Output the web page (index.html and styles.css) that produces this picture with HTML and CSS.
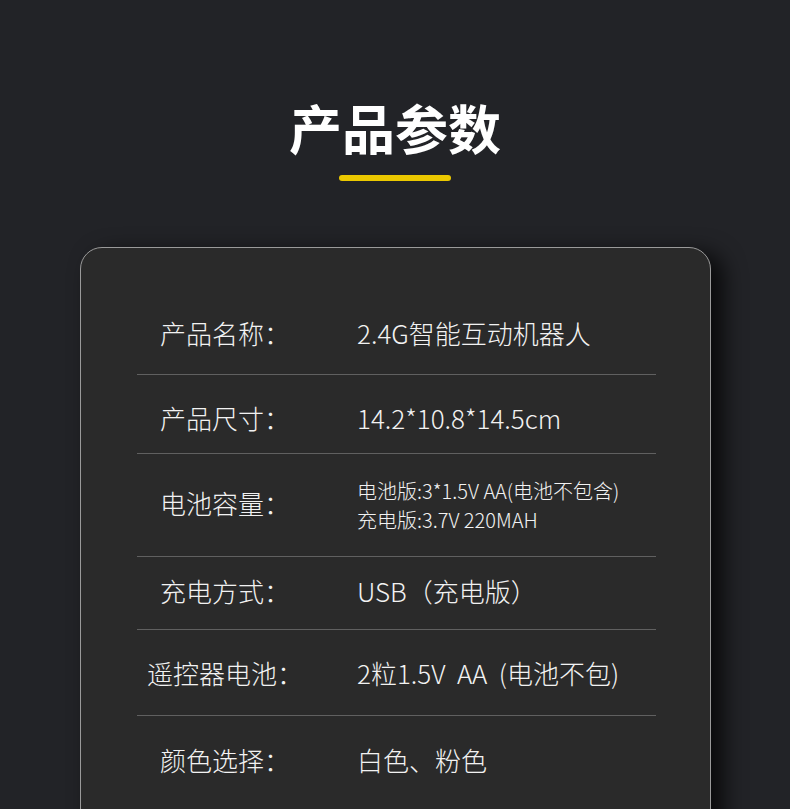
FILE: index.html
```html
<!DOCTYPE html>
<html lang="zh-CN">
<head>
<meta charset="utf-8">
<link rel="stylesheet" href="styles.css">
</head>
<body>
<div class="page">
  <header class="head">
    <h1 class="title">产品参数</h1>
    <div class="bar"></div>
  </header>
  <section class="card">
    <div class="row row-1">
      <div class="label">产品名称：</div>
      <div class="value">2.4G智能互动机器人</div>
    </div>
    <div class="row row-2">
      <div class="label">产品尺寸：</div>
      <div class="value">14.2*10.8*14.5cm</div>
    </div>
    <div class="row row-3">
      <div class="label">电池容量：</div>
      <div class="value small">
        <div>电池版:3*1.5V AA(电池不包含)</div>
        <div>充电版:3.7V 220MAH</div>
      </div>
    </div>
    <div class="row row-4">
      <div class="label">充电方式：</div>
      <div class="value">USB（充电版）</div>
    </div>
    <div class="row row-5">
      <div class="label">遥控器电池：</div>
      <div class="value">2粒1.5V&nbsp; AA&nbsp;&nbsp;(电池不包)</div>
    </div>
    <div class="row row-6">
      <div class="label">颜色选择：</div>
      <div class="value">白色、粉色</div>
    </div>
  </section>
</div>
</body>
</html>
```
FILE: styles.css
```css
html, body {
  margin: 0;
  padding: 0;
  background: #222327;
  overflow: hidden;
}
body {
  font-family: "Noto Sans CJK SC", "Noto Sans", sans-serif;
  color: #f2f2f2;
}
.page {
  width: 790px;
  height: 809px;
  overflow: hidden;
}
.head {
  display: flex;
  flex-direction: column;
  align-items: center;
  padding-top: 100px;
}
.title {
  margin: 0;
  font-size: 53px;
  line-height: 54px;
  font-weight: 700;
  color: #ffffff;
}
.bar {
  margin-top: 21px;
  width: 112px;
  height: 6px;
  border-radius: 3px;
  background: #ebc800;
}
.card {
  margin: 66px 0 0 80px;
  width: 631px;
  height: 700px;
  background: #2a2a2a;
  border: 1px solid #9a9a9a;
  border-radius: 22px;
  box-shadow: 12px 6px 22px rgba(0, 0, 0, 0.75);
  padding: 48px 54px 0 56px;
  box-sizing: border-box;
}
.row {
  display: grid;
  grid-template-columns: 176px 1fr;
  column-gap: 44px;
  align-items: center;
  border-bottom: 1px solid #606060;
  box-sizing: border-box;
  padding-bottom: 5px;
}
.label {
  text-align: center;
  font-size: 26px;
  line-height: 30px;
  font-weight: 300;
  white-space: nowrap;
}
.value {
  font-size: 26px;
  line-height: 30px;
  font-weight: 300;
  white-space: nowrap;
}
.value.small {
  font-size: 20px;
  line-height: 29px;
  margin-top: 5px;
}
.row-1 { height: 79px; }
.row-2 { height: 79px; padding-top: 12px; }
.row-3 { height: 103px; }
.row-4 { height: 73px; }
.row-5 { height: 86px; padding-top: 5px; }
.row-6 { height: 92px; border-bottom: none; }
```
